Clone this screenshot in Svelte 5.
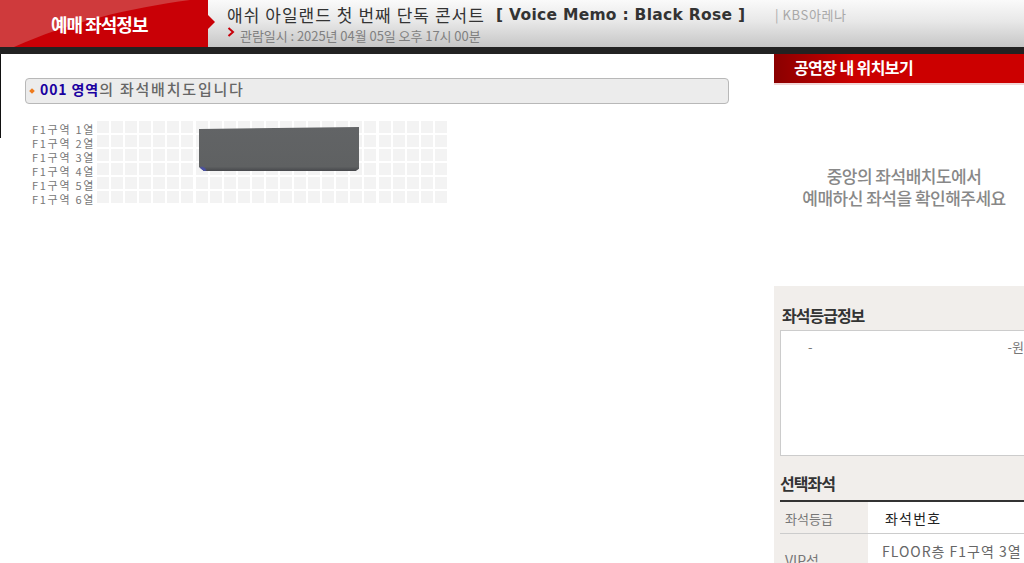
<script>
    // seat map: 6 rows, 25 columns
    const rows = [1, 2, 3, 4, 5, 6];
    const cols = Array.from({ length: 25 }, (_, i) => i);
</script>

<div class="page">
    <header class="top">
        <div class="top-label">
            <svg class="label-shine" width="208" height="47" viewBox="0 0 208 47">
                <path d="M0 0 H190 C130 8 70 22 14 47 H0 Z" fill="#cf3a3c" />
            </svg>
            <span>예매 좌석정보</span>
        </div>
        <div class="top-arrow"></div>
        <div class="top-info">
            <div class="title-row">
                <span class="title">애쉬 아일랜드 첫 번째 단독 콘서트</span>
                <span class="title-en">[ Voice Memo : Black Rose ]</span>
                <span class="venue">| KBS아레나</span>
            </div>
            <div class="date-row">
                <svg class="date-arrow" width="8" height="10" viewBox="0 0 8 10"><path d="M1.5 1 L6 5 L1.5 9" fill="none" stroke="#c8000a" stroke-width="2" /></svg>
                <span>관람일시 : 2025년 04월 05일 오후 17시 00분</span>
            </div>
        </div>
    </header>
    <div class="dark-bar"></div>

    <div class="body">
        <main class="left">
            <div class="zone-title">
                <i class="diamond"></i>
                <b>001 영역</b><span>의 좌석배치도입니다</span>
            </div>

            <div class="seatmap">
                <div class="row-labels">
                    {#each rows as r}
                        <div class="row-label">F1구역 {r}열</div>
                    {/each}
                </div>
                <div class="seats">
                    {#each rows as r}
                        {#each cols as c}
                            <div class="seat"></div>
                        {/each}
                    {/each}
                    <div class="sold-block"></div>
                </div>
            </div>
        </main>

        <aside class="right">
            <div class="right-head">공연장 내 위치보기</div>
            <div class="guide">
                <p>중앙의 좌석배치도에서<br />예매하신 좌석을 확인해주세요</p>
            </div>
            <div class="info">
                <h3 class="grade-title">좌석등급정보</h3>
                <div class="grade-box">
                    <span class="grade-name">-</span>
                    <span class="grade-price">-원</span>
                </div>
                <h3 class="sel-title">선택좌석</h3>
                <div class="sel-table">
                    <div class="th1">좌석등급</div>
                    <div class="th2">좌석번호</div>
                    <div class="td1">VIP석</div>
                    <div class="td2">FLOOR층 F1구역 3열</div>
                </div>
            </div>
        </aside>
    </div>
</div>

<style>
    :global(body) {
        margin: 0;
        background: #fff;
        overflow: hidden;
    }

    .page {
        width: 1024px;
        height: 563px;
        overflow: hidden;
        font-family: "Noto Sans CJK KR", "Liberation Sans", sans-serif;
    }

    /* ===== TOP BAR ===== */
    .top {
        display: flex;
        height: 47px;
        background: linear-gradient(to bottom, #fafafa 0%, #e8e8e8 45%, #c6c6c6 100%);
    }

    .top-label {
        position: relative;
        width: 208px;
        background: #c90006;
        display: flex;
        align-items: center;
        padding-left: 51px;
        box-sizing: border-box;
        color: #fff;
        font-size: 18px;
        font-weight: 700;
        letter-spacing: -1px;
    }

    .top-label span {
        position: relative;
    }

    .label-shine {
        position: absolute;
        left: 0;
        top: 0;
    }

    .top-arrow {
        width: 0;
        height: 0;
        margin-top: 15px;
        border-left: 7px solid #c90006;
        border-top: 7px solid transparent;
        border-bottom: 7px solid transparent;
    }

    .top-info {
        padding: 4px 0 0 12px;
    }

    .title-row {
        display: flex;
        align-items: center;
        height: 21px;
        color: #333;
        white-space: nowrap;
    }

    .title {
        font-size: 17px;
        font-weight: 400;
        letter-spacing: 1.05px;
        width: 269px;
        line-height: 21px;
    }

    .title-en {
        font-family: "DejaVu Sans", sans-serif;
        font-size: 15.5px;
        font-weight: 700;
        width: 279px;
        letter-spacing: 0.28px;
    }

    .venue {
        font-size: 13px;
        color: #a8a8a8;
        letter-spacing: 0.6px;
    }

    .date-row {
        display: flex;
        align-items: center;
        gap: 5px;
        height: 20px;
        font-size: 13px;
        letter-spacing: -0.05px;
        color: #808080;
    }

    .date-arrow {
        margin-top: -6px;
    }

    .dark-bar {
        height: 7px;
        background: #222;
    }

    /* ===== BODY ===== */
    .body {
        display: flex;
    }

    .left {
        position: relative;
        width: 774px;
        box-sizing: border-box;
        padding: 24px 0 0 25px;
    }

    /* thin black rule on the window edge */
    .left::before {
        content: "";
        position: absolute;
        left: 0;
        top: 0;
        width: 1px;
        height: 84px;
        background: #111;
    }

    .zone-title {
        width: 704px;
        height: 26px;
        box-sizing: border-box;
        border: 1px solid #b8b8b8;
        border-radius: 4px;
        background: #ececec;
        display: flex;
        align-items: center;
        padding: 0 0 5px 4px;
        font-size: 15px;
        letter-spacing: 1.8px;
        color: #666;
        font-weight: 500;
        white-space: pre;
    }

    .zone-title b {
        color: #1a00a0;
        font-weight: 700;
        font-size: 14px;
        letter-spacing: 0.9px;
    }

    .diamond {
        width: 4px;
        height: 4px;
        background: #ee7a1c;
        transform: rotate(45deg);
        margin: 5px 6px 0 0;
    }

    /* seat grid */
    .seatmap {
        display: flex;
        margin-top: 17px;
    }

    .row-labels {
        width: 72px;
        padding-left: 7px;
        box-sizing: border-box;
    }

    .row-label {
        height: 14px;
        line-height: 16px;
        font-size: 11px;
        letter-spacing: 1.7px;
        color: #777;
        white-space: nowrap;
    }

    .seats {
        position: relative;
        display: grid;
        grid-template-columns: repeat(25, 12px);
        grid-auto-rows: 12px;
        column-gap: 2.08px;
        row-gap: 2px;
    }

    .seat {
        background: #f3f3f3;
    }

    /* covers the sold area, lies over the grid */
    .sold-block {
        position: absolute;
        left: 102px;
        top: 6px;
        width: 160px;
        height: 44px;
        background:
            radial-gradient(circle at 3px 100%, #4a50a8 0, #4a50a8 3px, transparent 5px),
            linear-gradient(to bottom, #626466 0%, #5f6162 90%, #47484c 100%);
        clip-path: polygon(0 2px, 100% 0, 100% 95%, 98% 100%, 3% 100%, 0 91%);
    }

    /* ===== RIGHT PANEL ===== */
    .right {
        width: 250px;
        flex-shrink: 0;
    }

    .right-head {
        padding-left: 20px;
        box-sizing: border-box;
        border-bottom: 2px solid #f1d6d6;
        height: 31px;
        background: linear-gradient(to right, #8a0000 0%, #cc0000 32%, #cc0000 100%);
        color: #fff;
        font-size: 16px;
        font-weight: 700;
        letter-spacing: -0.6px;
        line-height: 27px;
    }

    .guide {
        height: 201px;
        display: flex;
        align-items: center;
        justify-content: center;
        box-sizing: border-box;
        padding: 3px 0 0 10px;
    }

    .guide p {
        margin: 0;
        text-align: center;
        color: #888;
        font-size: 17px;
        font-weight: 500;
        line-height: 22px;
        letter-spacing: -0.5px;
        white-space: nowrap;
    }

    .info {
        background: #f1eeeb;
        height: 277px;
        padding: 19px 0 0 6px;
        box-sizing: border-box;
    }

    .info h3 {
        margin: 0;
        font-size: 16px;
        font-weight: 700;
        letter-spacing: -1px;
        color: #333;
        line-height: 20px;
    }

    .grade-title {
        margin-left: 2px !important;
    }

    .grade-box {
        margin-top: 5px;
        height: 126px;
        box-sizing: border-box;
        background: #fff;
        border: 1px solid #ccc;
        width: 260px;
        font-size: 13px;
        color: #777;
        padding: 6px 15px 0 27px;
        display: flex;
        justify-content: space-between;
    }

    .sel-title {
        margin-top: 17px !important;
    }

    .sel-table {
        margin-top: 7px;
        width: 260px;
        border-top: 2px solid #333;
        display: grid;
        grid-template-columns: 88px 1fr;
        grid-template-rows: 31px 40px;
        font-size: 13px;
    }

    .th1, .td1 {
        color: #777;
        padding-left: 5px;
        line-height: 33px;
    }

    .th2 {
        background: #fff;
        color: #222;
        font-size: 14px;
        letter-spacing: 1.2px;
        padding-left: 17px;
        line-height: 33px;
    }

    .td2 {
        background: #fff;
        color: #666;
        padding-left: 14px;
        font-size: 14px;
        letter-spacing: 1px;
        line-height: 34px;
        border-top: 1px solid #ccc;
        white-space: nowrap;
    }

    .td1 {
        border-top: 1px solid #ccc;
        line-height: 52px;
        font-size: 14px;
    }
</style>
